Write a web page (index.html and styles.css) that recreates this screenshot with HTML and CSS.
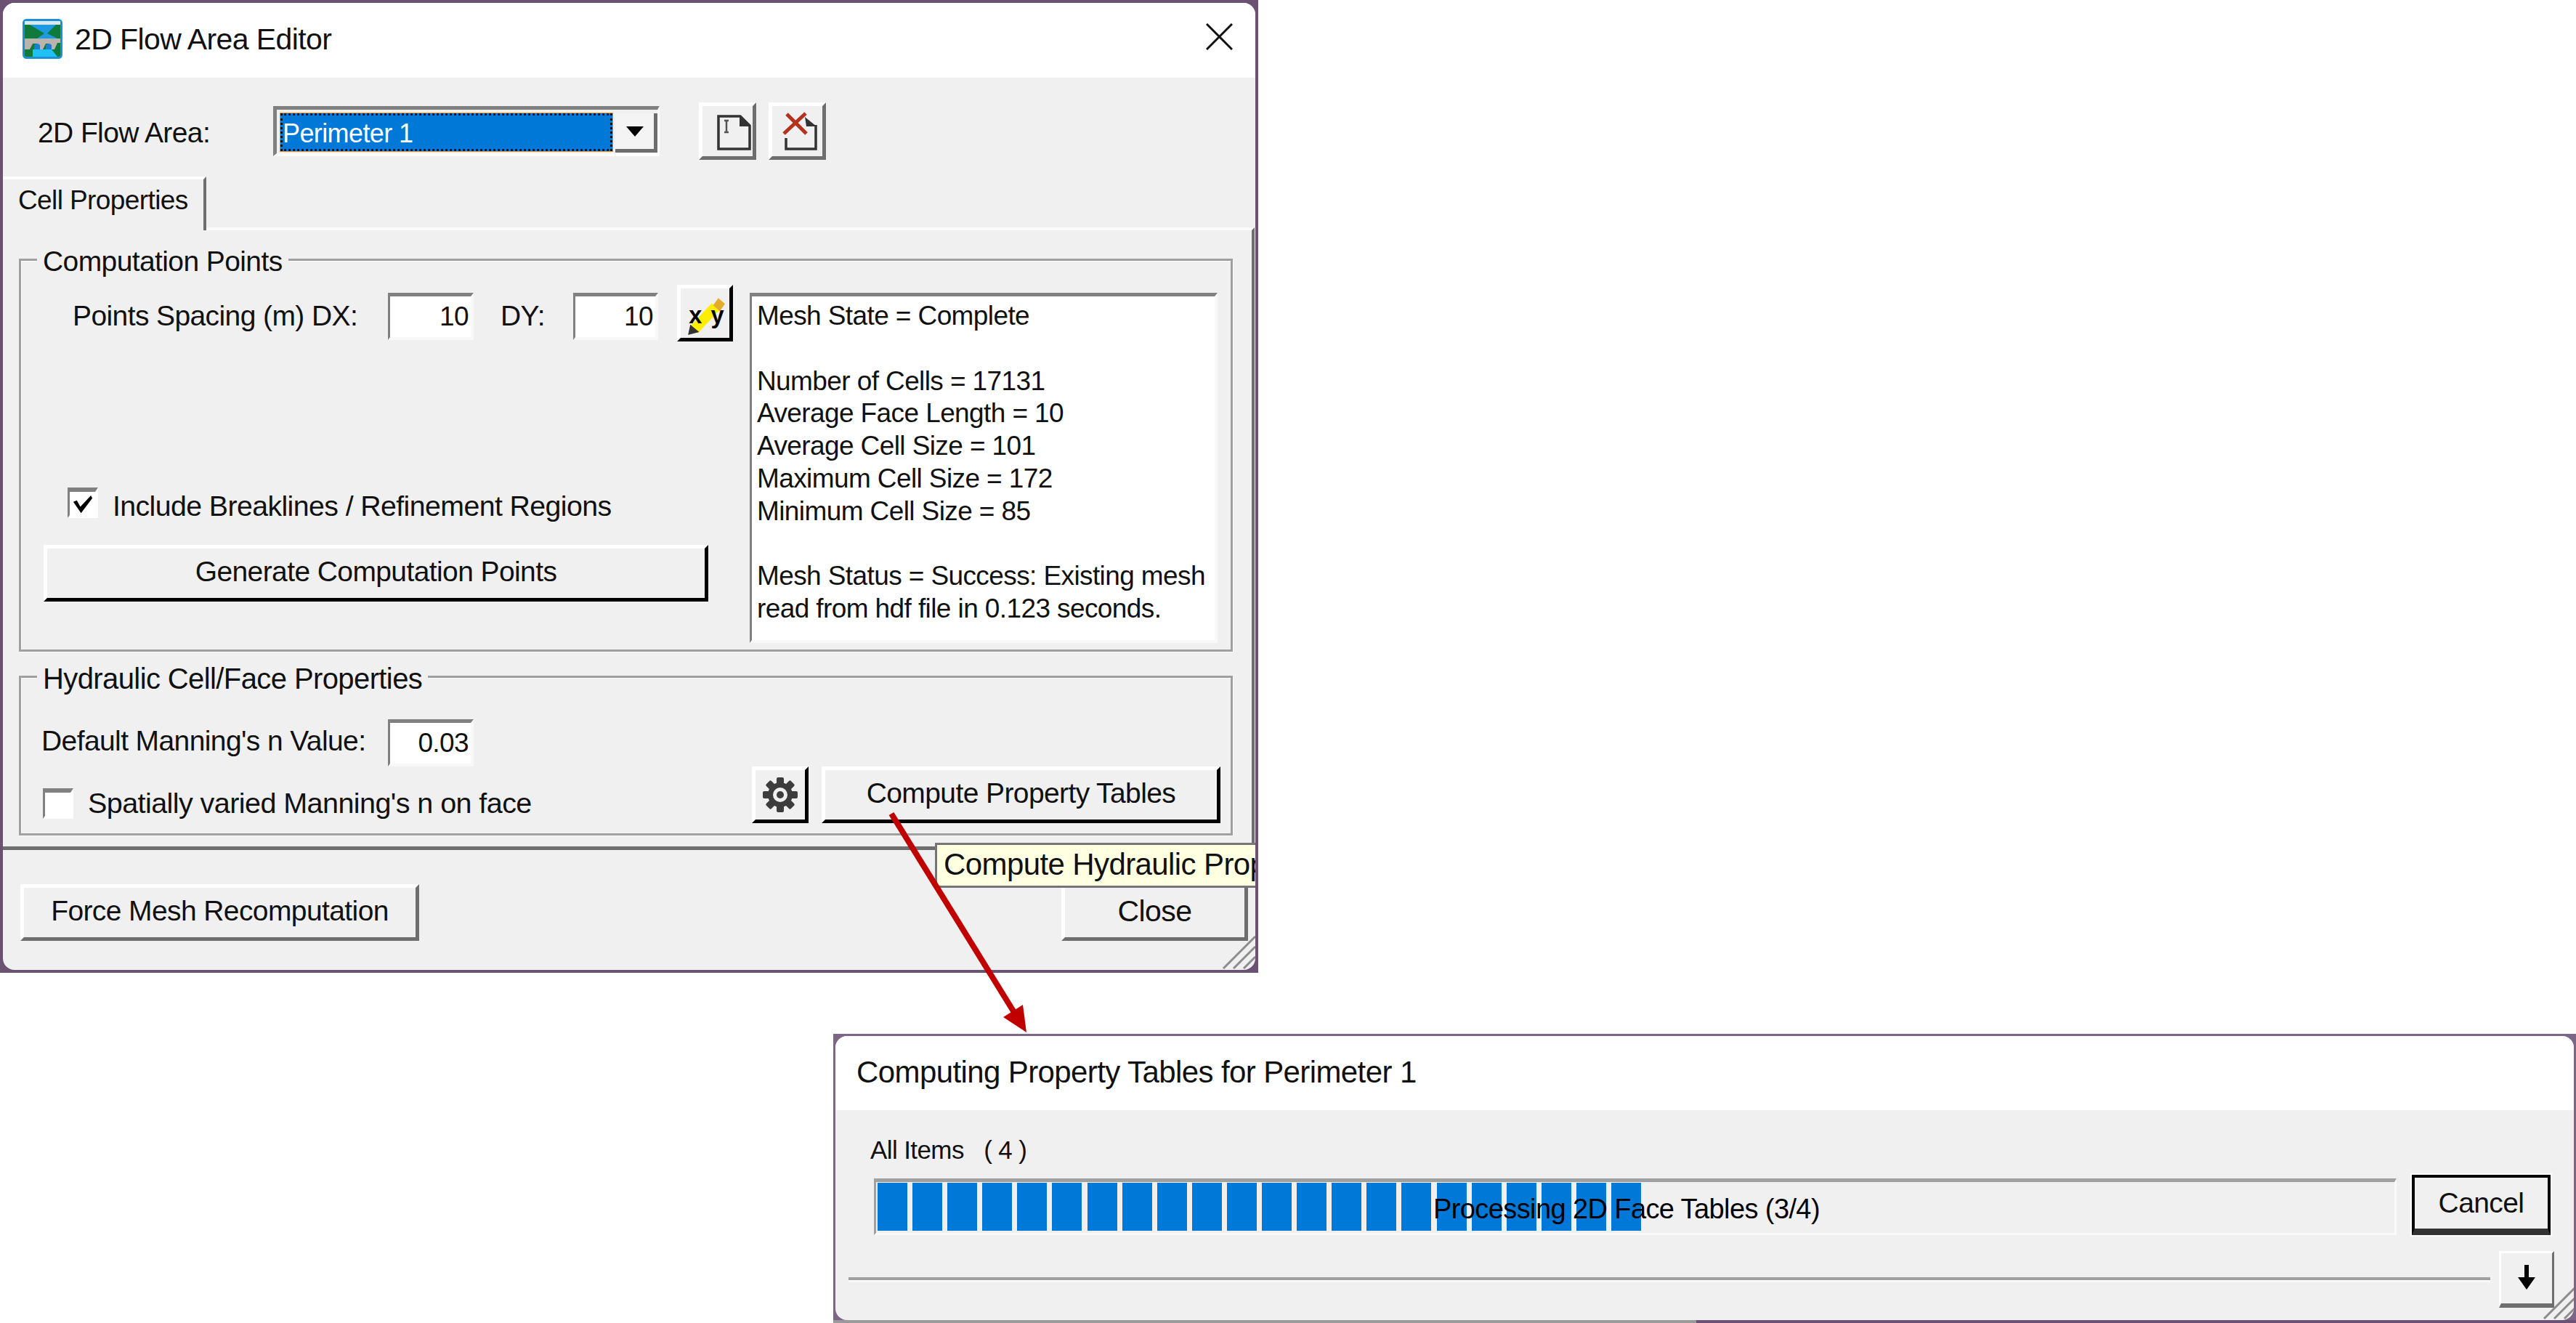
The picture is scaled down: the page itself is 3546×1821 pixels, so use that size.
FILE: index.html

```html
<!DOCTYPE html>
<html lang="en">
<head>
  <meta charset="UTF-8">
  <title>2D Flow Area Editor</title>
  <link rel="stylesheet" href="styles.css">
</head>
<body>

  <!-- editor window -->
  <div class="window editor">
    <div class="window-inner">
      <div class="titlebar">
        <svg class="app-icon" viewBox="0 0 55 55">
          <rect x="1.5" y="1.5" width="52" height="52" rx="4" fill="#0f7a3c" stroke="#1b8fd8" stroke-width="3"/>
          <rect x="3" y="3" width="49" height="5" fill="#d8e8ee"/>
          <path d="M10 8 H46 L34 20 L48 27 H20 L30 20 Z" fill="#1e9be0"/>
          <path d="M14 42 L40 42 L48 52 H14 Z" fill="#1ec0f5"/>
          <path d="M3 27 H52 V33 H48 L44 42 H40 L36 34 H32 L28 42 H24 L20 34 H14 L10 42 H3 Z" fill="#b9b4ac"/>
          <path d="M16 36 Q20 32 24 36 V42 H16 Z M32 36 Q36 32 40 36 V42 H32 Z" fill="#1b7ed0"/>
        </svg>
        <span class="title-text">2D Flow Area Editor</span>
        <svg class="close-x" viewBox="0 0 37 37">
          <path d="M1 1 L36 36 M36 1 L1 36" stroke="#111" stroke-width="3" fill="none"/>
        </svg>
      </div>

      <div class="body">
        <div class="area-row">
          <span class="area-label">2D Flow Area:</span>
          <div class="combo">
            <div class="combo-value">Perimeter 1</div>
            <div class="combo-btn"><span class="combo-arrow"></span></div>
          </div>
          <button class="btn icon-btn first-icon">
            <svg viewBox="0 0 69 69">
              <path d="M22 14 H52 L65 27 V59 H22 Z" fill="none" stroke="#333" stroke-width="3.5"/>
              <path d="M51 13 L66 28 H51 Z" fill="#333"/>
              <path d="M30 20 H36 M33 20 V36 M30 36 H36" stroke="#555" stroke-width="2.5" fill="none"/>
            </svg>
          </button>
          <button class="btn icon-btn">
            <svg viewBox="0 0 69 69">
              <path d="M19 44 V59 H60 V26" fill="none" stroke="#333" stroke-width="3.5"/>
              <path d="M45 15 L61 28 H47 Z" fill="#333"/>
              <path d="M16 38 L46 10 M20 11 L47 38" stroke="#b5311c" stroke-width="5" fill="none"/>
            </svg>
          </button>
        </div>

        <div class="tab">Cell Properties</div>

        <div class="panel">
          <div class="group points-group">
            <span class="group-title">Computation Points</span>
            <div class="points-left">
              <div class="spacing-row">
                <span class="spacing-label">Points Spacing (m) DX:</span>
                <div class="field dx-field">10</div>
                <span class="dy-label">DY:</span>
                <div class="field dy-field">10</div>
                <button class="btn-dark xy-btn">
                  <svg viewBox="0 0 66 66">
                    <path d="M18 55 L47 24" stroke="#ffee00" stroke-width="14" fill="none"/>
                    <path d="M44 22 L51 12 L60 20 L53 30 Z" fill="#e3ad2c"/>
                    <path d="M10 62 L13 48 L25 58 Z" fill="#333"/>
                    <text class="xy-text" x="11" y="46">x</text>
                    <text class="xy-text" x="41" y="46">y</text>
                  </svg>
                </button>
              </div>
              <label class="check-row include-row">
                <span class="checkbox"><svg viewBox="0 0 32 32"><path d="M3 12 L8 10 L13 19 L28 3 L30 7 L14 28 Z" fill="#000"/></svg></span>
                <span class="include-text">Include Breaklines / Refinement Regions</span>
              </label>
              <button class="btn-dark generate-btn">Generate Computation Points</button>
            </div>
            <div class="mesh-box">Mesh State = Complete

Number of Cells = 17131
Average Face Length = 10
Average Cell Size = 101
Maximum Cell Size = 172
Minimum Cell Size = 85

Mesh Status = Success: Existing mesh
read from hdf file in 0.123 seconds.</div>
          </div>

          <div class="group hydraulic-group">
            <span class="group-title hydraulic-title">Hydraulic Cell/Face Properties</span>
            <div class="hydraulic-left">
              <div class="manning-row">
                <span class="manning-label">Default Manning's n Value:</span>
                <div class="field dx-field">0.03</div>
              </div>
              <label class="check-row varied-row">
                <span class="checkbox"></span>
                <span class="varied-text">Spatially varied Manning's n on face</span>
              </label>
            </div>
            <button class="btn-dark gear-btn">
              <svg viewBox="0 0 48 48">
                <g fill="#3d3d3d">
                  <rect x="19" y="0" width="10" height="48" rx="2"/>
                  <rect x="19" y="0" width="10" height="48" rx="2" transform="rotate(45 24 24)"/>
                  <rect x="19" y="0" width="10" height="48" rx="2" transform="rotate(90 24 24)"/>
                  <rect x="19" y="0" width="10" height="48" rx="2" transform="rotate(135 24 24)"/>
                  <circle cx="24" cy="24" r="17"/>
                </g>
                <circle cx="24" cy="24" r="10" fill="#f0f0f0"/>
                <circle cx="24" cy="24" r="5" fill="#3d3d3d"/>
              </svg>
            </button>
            <button class="btn-dark compute-btn">Compute Property Tables</button>
          </div>
        </div>

        <div class="footer">
          <button class="btn force-btn">Force Mesh Recomputation</button>
          <button class="btn close-btn">Close</button>
        </div>
      </div>

      <div class="tooltip">Compute Hydraulic Prop</div>
      <svg class="grip" viewBox="0 0 48 48">
        <path d="M2 46 L46 2 M16 46 L46 16 M30 46 L46 30" stroke="#8c8c8c" stroke-width="3" fill="none"/>
      </svg>
    </div>
  </div>

  <!-- progress window -->
  <div class="window progress-win">
    <div class="window-inner">
      <div class="titlebar progress-title">
        <span class="title-text">Computing Property Tables for Perimeter 1</span>
      </div>
      <div class="progress-body">
        <div class="items-label">All Items &nbsp; ( 4 )</div>
        <div class="progress-row">
          <div class="progress">
            <div class="progress-fill"></div>
            <span class="progress-text">Processing 2D Face Tables (3/4)</span>
          </div>
          <button class="cancel-btn">Cancel</button>
        </div>
        <div class="progress-bottom">
          <div class="separator"></div>
          <button class="btn down-btn">
            <svg viewBox="0 0 30 34"><path d="M12 0 H18 V17 H27 L15 34 L3 17 H12 Z" fill="#000"/></svg>
          </button>
        </div>
      </div>
      <svg class="grip grip-small" viewBox="0 0 48 48">
        <path d="M2 46 L46 2 M16 46 L46 16 M30 46 L46 30" stroke="#8c8c8c" stroke-width="3" fill="none"/>
      </svg>
    </div>
  </div>

  <!-- red arrow between the two windows -->
  <svg class="callout" viewBox="0 0 3546 1821">
    <line x1="1227" y1="1120" x2="1397" y2="1395" stroke="#c00000" stroke-width="8"/>
    <polygon points="1413,1421 1408,1383 1381,1400" fill="#c00000"/>
  </svg>

</body>
</html>
```

FILE: styles.css

```css
html, body {
  margin: 0;
  padding: 0;
  background: white;
}
body {
  position: relative;
  width: 3546px;
  height: 1821px;
  overflow: hidden;
  font-family: "Liberation Sans", Arial, sans-serif;
  font-size: 39px;
  letter-spacing: -0.6px;
  color: #111;
}
button {
  font: inherit;
  letter-spacing: inherit;
  color: inherit;
  padding: 0 0 4px;
  margin: 0;
  box-sizing: border-box;
  background: #f0f0f0;
}
svg {
  display: block;
}

/* windows sit on a free canvas */
.window {
  position: absolute;
  box-sizing: border-box;
  background: #6b5272;
  padding: 4px;
}
.editor {
  left: 0;
  top: 0;
  width: 1732px;
  height: 1339px;
}
.progress-win {
  left: 1147px;
  top: 1423px;
  width: 2399px;
  height: 398px;
  padding: 3px 3px 4px;
  background: linear-gradient(90deg, #9a9a9a 1188px, #6b5272 1188px) bottom / 100% 4px no-repeat, #7d6587;
}
.window-inner {
  position: relative;
  height: 100%;
  background: #f0f0f0;
  border-radius: 16px;
  overflow: hidden;
}
.titlebar {
  display: flex;
  align-items: center;
  height: 103px;
  background: white;
  padding-left: 27px;
  padding-right: 31px;
  padding-bottom: 2px;
  box-sizing: border-box;
}
.app-icon {
  width: 55px;
  height: 55px;
  margin-right: 17px;
  margin-top: -2px;
}
.title-text {
  flex: 1;
  font-size: 41px;
}
.progress-title .title-text {
  font-size: 42px;
}
.close-x {
  width: 37px;
  height: 37px;
  margin-top: -8px;
}

/* bevels */
.btn {
  border-style: solid;
  border-width: 5px;
  border-color: white #6e6e6e #6e6e6e white;
}
.btn-dark {
  border-style: solid;
  border-width: 5px;
  border-color: white #000 #000 white;
}
.field {
  box-sizing: border-box;
  background: white;
  border-style: solid;
  border-width: 5px 4px 4px 3px;
  border-color: #808080 #f8f8f8 #f8f8f8 #808080;
  text-align: right;
  padding-right: 3px;
  font-size: 37px;
  line-height: 55px;
}

/* top row */
.area-row {
  display: flex;
  align-items: center;
  padding-top: 34px;
  height: 79px;
}
.area-label {
  width: 324px;
  margin-left: 48px;
  margin-top: 3px;
  line-height: 79px;
}
.combo {
  display: flex;
  box-sizing: border-box;
  width: 532px;
  height: 69px;
  border-style: solid;
  border-width: 5px 3px 4px 5px;
  border-color: #808080 #fff #fff #808080;
  padding: 5px 0 0 5px;
}
.combo-value {
  box-sizing: border-box;
  width: 457px;
  height: 52px;
  background: #0078d7;
  color: white;
  border: 3px dotted #1a1206;
  outline: 1px solid #f0902a;
  font-size: 36px;
  line-height: 50px;
}
.combo-btn {
  display: flex;
  align-items: center;
  justify-content: center;
  box-sizing: border-box;
  width: 58px;
  height: 54px;
  margin-left: 4px;
  border-bottom: 5px solid #6e6e6e;
  border-right: 5px solid #6e6e6e;
  background: #f4f4f4;
}
.combo-arrow {
  width: 0;
  height: 0;
  border-left: 12px solid transparent;
  border-right: 12px solid transparent;
  border-top: 14px solid #000;
}
.icon-btn {
  width: 79px;
  height: 79px;
  margin-left: 17px;
  padding: 0;
}
.first-icon {
  margin-left: 54px;
}
.icon-btn svg {
  width: 69px;
  height: 69px;
}

/* tab and its panel */
.tab {
  position: relative;
  z-index: 1;
  box-sizing: border-box;
  width: 280px;
  height: 74px;
  margin-top: 23px;
  margin-bottom: -4px;
  padding-left: 21px;
  background: #f0f0f0;
  border-top: 4px solid white;
  border-right: 4px solid #6e6e6e;
  font-size: 37px;
  line-height: 58px;
}
.panel {
  box-sizing: border-box;
  width: 1723px;
  height: 857px;
  padding: 39px 22px 0 22px;
  border-top: 4px solid #fafafa;
  border-right: 4px solid #6e6e6e;
  border-bottom: 5px solid #6e6e6e;
}

/* group boxes */
.group {
  position: relative;
  display: flex;
  box-sizing: border-box;
  width: 1671px;
  border: 3px solid #a0a0a0;
  box-shadow: inset 1px 1px 0 #fff, 1px 1px 0 #fff;
}
.group-title {
  position: absolute;
  left: 22px;
  top: -21px;
  padding: 0 8px;
  background: #f0f0f0;
  line-height: 44px;
}
.hydraulic-title {
  font-size: 40px;
}
.points-group {
  height: 541px;
  padding: 33px 18px 9px 0;
}
.points-left {
  display: flex;
  flex-direction: column;
  width: 1003px;
}
.spacing-row {
  display: flex;
  align-items: flex-start;
  margin-left: 71px;
}
.spacing-label {
  width: 434px;
  margin-top: 11px;
  line-height: 64px;
}
.dx-field {
  width: 118px;
  height: 65px;
  margin-top: 11px;
}
.dy-label {
  width: 100px;
  margin-left: 37px;
  margin-top: 11px;
  line-height: 64px;
}
.dy-field {
  width: 117px;
  height: 65px;
  margin-top: 11px;
}
.xy-btn {
  width: 77px;
  height: 78px;
  margin-left: 26px;
  padding: 0;
}
.xy-text {
  font-family: "Liberation Sans", Arial, sans-serif;
  font-weight: bold;
  font-size: 32px;
  fill: #000;
}
.check-row {
  display: flex;
  align-items: center;
}
.checkbox {
  display: block;
  box-sizing: border-box;
  width: 42px;
  height: 42px;
  padding: 2px;
  background: white;
  border-style: solid;
  border-width: 6px 4px 4px 3px;
  border-color: #808080 #fff #fff #808080;
}
.include-row {
  margin-top: auto;
  margin-left: 64px;
  line-height: 50px;
}
.include-row .checkbox {
  margin-right: 20px;
  margin-bottom: 2px;
}
.include-text {
  padding-top: 6px;
  font-size: 39.3px;
}
.generate-btn {
  width: 915px;
  height: 78px;
  margin: 29px 0 57px 31px;
}
.mesh-box {
  box-sizing: border-box;
  width: 644px;
  height: 482px;
  margin-top: 11px;
  padding: 5px 0 0 7px;
  background: white;
  border-style: solid;
  border-width: 5px 4px 4px 3px;
  border-color: #808080 #f8f8f8 #f8f8f8 #808080;
  white-space: pre-wrap;
  font-size: 37px;
  line-height: 44.8px;
}

.hydraulic-group {
  height: 220px;
  margin-top: 33px;
  padding: 57px 14px 14px 0;
  align-items: flex-end;
}
.hydraulic-left {
  align-self: flex-start;
  width: 1006px;
}
.manning-row {
  display: flex;
  margin-left: 28px;
}
.manning-label {
  width: 477px;
  line-height: 60px;
}
.manning-row .dx-field {
  margin-top: 0;
}
.varied-row {
  margin-top: 28px;
  margin-left: 30px;
}
.varied-row .checkbox {
  margin-right: 20px;
}
.varied-text {
  font-size: 39.6px;
}
.gear-btn {
  flex: none;
  display: flex;
  align-items: center;
  justify-content: center;
  width: 78px;
  height: 78px;
  margin-right: 18px;
  padding: 0;
}
.gear-btn svg {
  width: 48px;
  height: 48px;
}
.compute-btn {
  flex: none;
  width: 549px;
  height: 78px;
}

/* footer */
.footer {
  display: flex;
  justify-content: space-between;
  padding: 47px 10px 0 24px;
}
.force-btn {
  width: 549px;
  height: 78px;
}
.close-btn {
  width: 257px;
  height: 78px;
  font-size: 41px;
}

/* things lying over the window */
.tooltip {
  position: absolute;
  left: 1283px;
  top: 1156px;
  box-sizing: border-box;
  width: 800px;
  height: 62px;
  padding-left: 9px;
  background: #ffffe1;
  border: 3px solid #767676;
  font-size: 42px;
  line-height: 54px;
  white-space: nowrap;
}
.grip {
  position: absolute;
  right: -2px;
  bottom: 0;
  width: 48px;
  height: 48px;
}
.callout {
  position: absolute;
  left: 0;
  top: 0;
  width: 3546px;
  height: 1821px;
  pointer-events: none;
}

/* progress window */
.progress-title {
  padding-left: 29px;
  height: 102px;
}
.progress-body {
  padding: 30px 0 0 53px;
}
.items-label {
  font-size: 35px;
  line-height: 50px;
  margin-left: -5px;
}
.progress-row {
  display: flex;
  align-items: flex-start;
  margin-top: 9px;
}
.progress {
  position: relative;
  box-sizing: border-box;
  width: 2096px;
  height: 78px;
  margin-top: 5px;
  padding: 1px 0 0 2px;
  border-style: solid;
  border-width: 5px 3px 3px 3px;
  border-color: #a0a0a0 #fafafa #fafafa #a0a0a0;
}
.progress-fill {
  width: 1052px;
  height: 66px;
  background: repeating-linear-gradient(90deg, #0078d7 0, #0078d7 41px, transparent 41px, transparent 48.1px);
}
.progress-text {
  position: absolute;
  left: 767px;
  top: 15px;
  color: #000;
  font-size: 38px;
  white-space: nowrap;
  line-height: 44px;
}
.cancel-btn {
  width: 191px;
  height: 83px;
  margin-left: 21px;
  border: 4px solid #000;
  border-bottom: 9px solid #333;
  box-shadow: 0 0 0 2px #fff;
  padding-bottom: 0;
}
.progress-bottom {
  display: flex;
  align-items: center;
  margin: 22px 0 0 -35px;
}
.separator {
  width: 2260px;
  height: 4px;
  background: #a0a0a0;
  border-bottom: 3px solid #fafafa;
}
.down-btn {
  display: flex;
  align-items: center;
  justify-content: center;
  width: 76px;
  height: 78px;
  margin-left: 12px;
  padding: 0 0 4px;
  border-width: 3px 3px 6px 3px;
}
.down-btn svg {
  width: 30px;
  height: 34px;
}
.grip-small {
  right: -5px;
}
```
